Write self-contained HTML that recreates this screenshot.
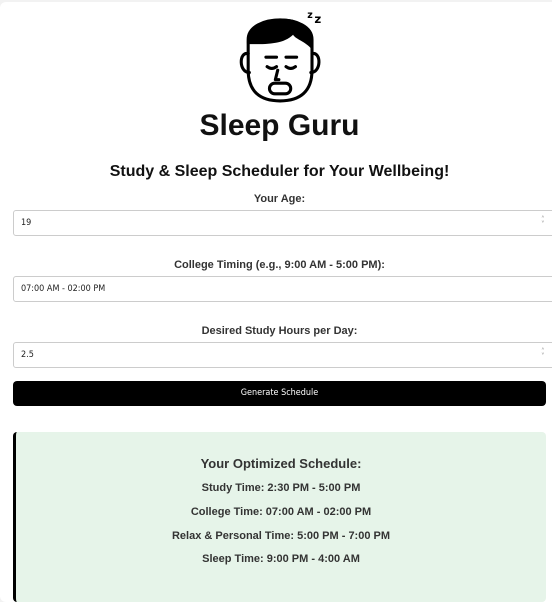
<!DOCTYPE html>
<html><head><meta charset="utf-8"><style>
html,body{margin:0;padding:0;background:#f2f2f2;width:552px;height:586px;overflow:hidden;font-family:"Liberation Sans",sans-serif;}
.c{position:absolute;left:0;top:2px;width:560px;height:600px;background:#fff;border-radius:6px;}
.logo{position:absolute;left:234px;top:2px;}
.brand{position:absolute;left:0;width:559px;top:107px;text-align:center;font:bold 30px "Liberation Sans",sans-serif;color:#111;}
h2{position:absolute;left:0;width:559px;top:161px;margin:0;text-align:center;font-size:16px;color:#111;}
.lbl{position:absolute;left:0;width:559px;text-align:center;font-size:11px;font-weight:bold;color:#333;}
.in{position:absolute;left:13px;width:560px;height:26px;border:1px solid #ccc;border-radius:3px;box-sizing:border-box;font:9px "DejaVu Sans Condensed","Liberation Sans",sans-serif;color:#222;padding:7px 7px;}
.sp{position:absolute;left:527px;top:6px;font-size:8px;color:#999;line-height:5px;}
.btn{position:absolute;left:13px;top:379px;width:533px;height:25px;background:#000;border-radius:4px;color:#fff;text-align:center;font:9px "DejaVu Sans Condensed",sans-serif;line-height:25px;}
.res{position:absolute;left:13px;top:430px;width:533px;height:170px;background:#e6f4e9;border-left:3px solid #000;border-radius:4px;box-sizing:border-box;color:#333;text-align:center;font-weight:bold;}
.res div{position:absolute;left:0;width:530px;font-size:11px;}
</style></head><body>
<div class="c">
<svg class="logo" width="104" height="104" viewBox="0 0 88 88">
 <g fill="none" stroke="#000" stroke-width="2.6" stroke-linecap="round" stroke-linejoin="round">
  <path d="M12 30 C12 8 66 8 66 30 L66 56 C66 74 56 82 39 82 C22 82 12 74 12 56 Z"/>
  <path d="M12 42 C4 40 4 58 13 58"/>
  <path d="M66 42 C74 40 74 58 65 58"/>
  <path d="M27 45 h9 M44 45 h9"/>
  <path d="M28 53 q4 3 8 0 M44 53 q4 3 8 0"/>
  <path d="M37 56 l-2 8 h3"/>
  <rect x="30" y="67" width="18" height="9" rx="4.5"/>
 </g>
 <path d="M11 34 C8 6 70 4 67 34 L67 40 C62 32 52 30 50 26 C42 34 28 34 14 34 Z" fill="#000"/>
 <text x="62" y="12" font-family="DejaVu Sans" font-weight="bold" font-size="8">z</text>
 <text x="68" y="16" font-family="DejaVu Sans" font-weight="bold" font-size="10">z</text>
</svg>
<div class="brand">Sleep Guru</div>
<h2>Study &amp; Sleep Scheduler for Your Wellbeing!</h2>
<div class="lbl" style="top:191px">Your Age:</div>
<div class="in" style="top:208px">19<span class="sp">˄<br>˅</span></div>
<div class="lbl" style="top:257px">College Timing (e.g., 9:00 AM - 5:00 PM):</div>
<div class="in" style="top:274px">07:00 AM - 02:00 PM</div>
<div class="lbl" style="top:323px">Desired Study Hours per Day:</div>
<div class="in" style="top:340px">2.5<span class="sp">˄<br>˅</span></div>
<div class="btn">Generate Schedule</div>
<div class="res">
 <div style="top:24px;font-size:13px">Your Optimized Schedule:</div>
 <div style="top:50px">Study Time: 2:30 PM - 5:00 PM</div>
 <div style="top:74px">College Time: 07:00 AM - 02:00 PM</div>
 <div style="top:98px">Relax &amp; Personal Time: 5:00 PM - 7:00 PM</div>
 <div style="top:121px">Sleep Time: 9:00 PM - 4:00 AM</div>
</div>
</div>
</body></html>
